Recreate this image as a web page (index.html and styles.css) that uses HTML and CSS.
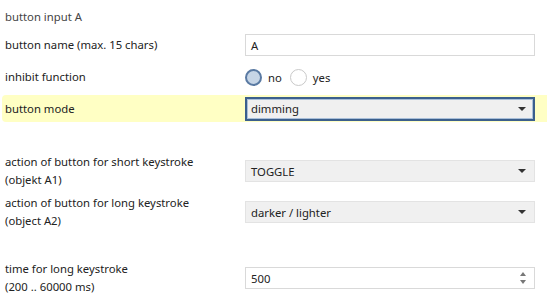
FILE: index.html
```html
<!DOCTYPE html>
<html lang="en">

<head>
    <meta charset="UTF-8">
    <title>button input A</title>
    <link rel="stylesheet" href="styles.css">
</head>

<body>
    <div class="page">
        <div class="title">button input A</div>

        <div class="row row-name">
            <div class="label">button name (max. 15 chars)</div>
            <div class="field">
                <div class="textbox">A</div>
            </div>
        </div>

        <div class="row row-inhibit">
            <div class="label">inhibit function</div>
            <div class="field radios">
                <span class="radio checked"></span><span class="radio-text">no</span>
                <span class="radio"></span><span class="radio-text">yes</span>
            </div>
        </div>

        <div class="row row-mode highlight">
            <div class="label">button mode</div>
            <div class="field">
                <div class="select focused">
                    <span>dimming</span>
                    <i class="caret"></i>
                </div>
            </div>
        </div>

        <div class="row row-short">
            <div class="label">action of button for short keystroke<br>(objekt A1)</div>
            <div class="field">
                <div class="select">
                    <span>TOGGLE</span>
                    <i class="caret"></i>
                </div>
            </div>
        </div>

        <div class="row row-long">
            <div class="label">action of button for long keystroke<br>(object A2)</div>
            <div class="field">
                <div class="select">
                    <span>darker / lighter</span>
                    <i class="caret"></i>
                </div>
            </div>
        </div>

        <div class="row row-time">
            <div class="label">time for long keystroke<br>(200 .. 60000 ms)</div>
            <div class="field">
                <div class="textbox spin">
                    <span>500</span>
                    <span class="spinner">
                        <i class="up"></i>
                        <i class="down"></i>
                    </span>
                </div>
            </div>
        </div>
    </div>
</body>

</html>
```

FILE: styles.css
```css
body {
    margin: 0;
    background-color: #ffffff;
    font-family: 'Noto Sans', 'Open Sans', sans-serif;
    font-size: 11.3px;
    color: #222222;
}

.page {
    width: 547px;
}

.title {
    height: 33px;
    line-height: 34px;
    padding-left: 5px;
    color: #444444;
}

.row {
    display: flex;
    align-items: center;
}

.label {
    width: 240px;
    padding-left: 5px;
    line-height: 18px;
}

.field {
    width: 290px;
}

.row-name {
    height: 24px;
}

.row-inhibit {
    height: 24px;
    margin-top: 8px;
}

.row-mode {
    height: 27px;
    margin-top: 6px;
}

.row-short {
    height: 44px;
    margin-top: 27px;
}

.row-long {
    height: 44px;
    margin-top: -3px;
}

.row-time {
    height: 44px;
    margin-top: 22px;
}

.highlight {
    background-color: #ffffc4;
    margin-left: 2px;
    border-radius: 4px 0 0 4px;
}

.highlight .label {
    padding-left: 3px;
}

.textbox {
    height: 20px;
    border: 1px solid #d9d9d9;
    background: #ffffff;
    display: flex;
    align-items: center;
    justify-content: space-between;
    padding: 0 8px 0 5px;
}

.select {
    height: 20px;
    border: 1px solid #e3e3e3;
    background: #f0f0f0;
    display: flex;
    align-items: center;
    justify-content: space-between;
    padding: 0 8px 0 5px;
}

.select.focused {
    height: 20px;
    border: 2px solid #3b5f8c;
    box-shadow: inset 0 0 0 1px #a9bfd9;
    padding: 0 7px 0 4px;
}

.caret {
    width: 0;
    height: 0;
    border-left: 4px solid transparent;
    border-right: 4px solid transparent;
    border-top: 4px solid #333333;
}

.spinner {
    display: flex;
    flex-direction: column;
    gap: 4px;
}

.spinner i {
    width: 0;
    height: 0;
    border-left: 3px solid transparent;
    border-right: 3px solid transparent;
}

.spinner .up {
    border-bottom: 4px solid #777777;
}

.spinner .down {
    border-top: 4px solid #777777;
}

.radios {
    display: flex;
    align-items: center;
}

.radio {
    border: 1px solid #c9c9c9;
    border-radius: 50%;
    background: #ffffff;
    box-sizing: border-box;
    width: 17px;
    height: 17px;
}

.radio.checked {
    border: 2px solid #5a7aa3;
    background: #c6d5e6;
}

.radio-text {
    margin-left: 6px;
    margin-right: 8px;
}
```
